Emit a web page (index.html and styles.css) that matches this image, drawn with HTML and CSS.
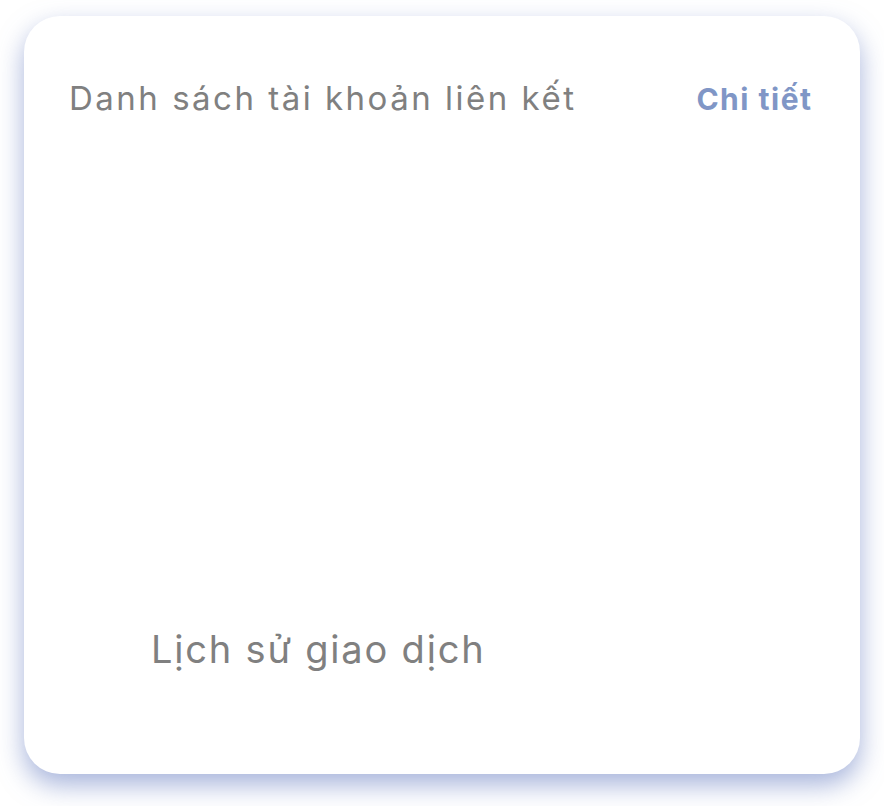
FILE: index.html
```html
<!DOCTYPE html>
<html lang="vi">
<head>
<meta charset="utf-8">
<title>Tài khoản</title>
<link rel="stylesheet" href="styles.css">
</head>
<body>
<div class="page">
  <section class="card">
    <header class="card-head">
      <h2 class="card-title">Danh sách tài khoản liên kết</h2>
      <a class="card-link" href="#">Chi tiết</a>
    </header>
    <div class="card-body"></div>
    <div class="history">Lịch sử giao dịch</div>
  </section>
</div>
</body>
</html>
```
FILE: styles.css
```css
html, body {
  margin: 0;
  padding: 0;
  background: #ffffff;
}
body {
  font-family: Inter, "Noto Sans", sans-serif;
}
.page {
  box-sizing: border-box;
  min-height: 806px;
  padding: 16px 24px 32px 24px;
}
.card {
  box-sizing: border-box;
  width: 836px;
  height: 758px;
  background: #ffffff;
  border-radius: 36px;
  box-shadow: 0 11px 26px rgba(95, 118, 190, 0.55);
  display: flex;
  flex-direction: column;
  padding: 62px 49px 0 45px;
}
.card-head {
  display: flex;
  justify-content: space-between;
  align-items: baseline;
}
.card-title {
  margin: 0;
  font-size: 33px;
  font-weight: 400;
  color: #808080;
  line-height: 40px;
  letter-spacing: 2.5px;
}
.card-link {
  font-size: 30px;
  font-weight: 700;
  color: #8096c6;
  text-decoration: none;
  line-height: 40px;
  letter-spacing: 1.5px;
  margin-right: -1.5px;
}
.card-body {
  height: 506px;
}
.history {
  padding-left: 82px;
  font-size: 38px;
  line-height: 48px;
  color: #808080;
  letter-spacing: 1.8px;
}
```
